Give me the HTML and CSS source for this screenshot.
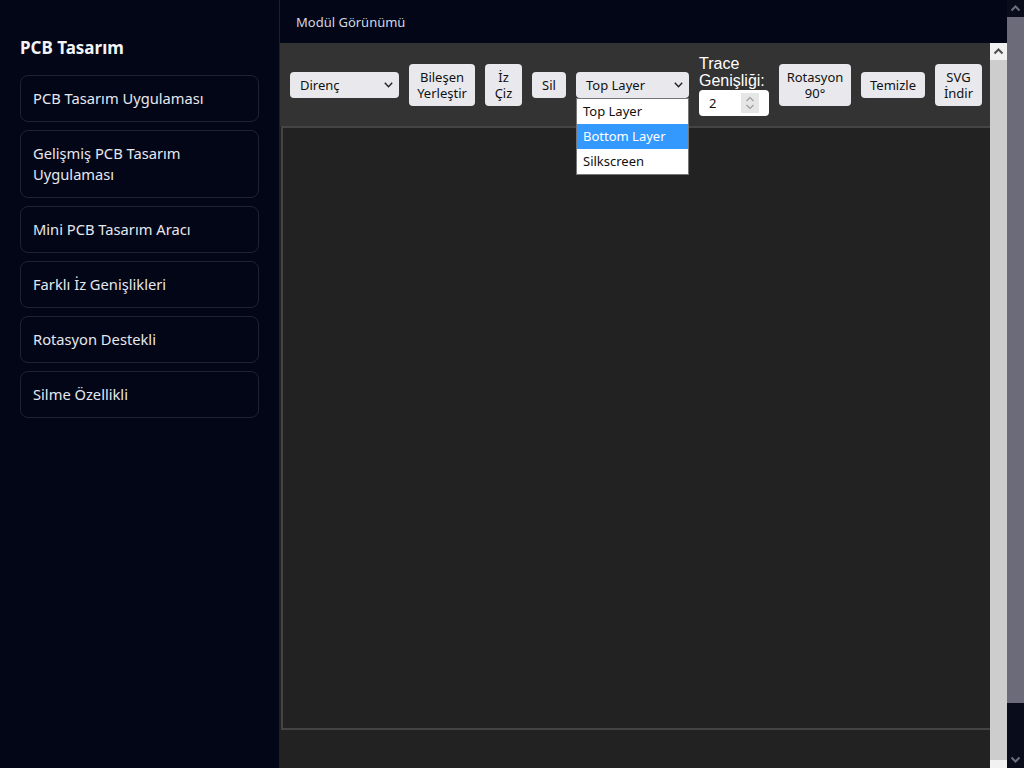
FILE: index.html
```html
<!DOCTYPE html>
<html lang="tr">
<head>
<meta charset="utf-8">
<title>PCB Tasarım</title>
<link rel="stylesheet" href="styles.css">
</head>
<body>
<div class="app">
  <aside class="sidebar">
    <h2 class="side-title">PCB Tasarım</h2>
    <nav class="side-list">
      <div class="side-card">PCB Tasarım Uygulaması</div>
      <div class="side-card">Gelişmiş PCB Tasarım Uygulaması</div>
      <div class="side-card">Mini PCB Tasarım Aracı</div>
      <div class="side-card">Farklı İz Genişlikleri</div>
      <div class="side-card">Rotasyon Destekli</div>
      <div class="side-card">Silme Özellikli</div>
    </nav>
  </aside>
  <main class="main">
    <header class="main-header">Modül Görünümü</header>
    <div class="frame">
      <div class="frame-content">
        <div class="toolbar">
          <div class="select select-part">
            <span>Direnç</span>
            <svg class="chev" width="9" height="6" viewBox="0 0 9 6"><path d="M0.8 0.8 L4.5 4.8 L8.2 0.8" fill="none" stroke="#222" stroke-width="1.4"/></svg>
          </div>
          <button class="btn btn-place">Bileşen<br>Yerleştir</button>
          <button class="btn btn-trace">İz<br>Çiz</button>
          <button class="btn btn-del">Sil</button>
          <div class="select select-layer">
            <span>Top Layer</span>
            <svg class="chev" width="9" height="6" viewBox="0 0 9 6"><path d="M0.8 0.8 L4.5 4.8 L8.2 0.8" fill="none" stroke="#222" stroke-width="1.4"/></svg>
            <ul class="options">
              <li class="opt">Top Layer</li>
              <li class="opt opt-active">Bottom Layer</li>
              <li class="opt">Silkscreen</li>
            </ul>
          </div>
          <label class="trace"><span class="trace-text">Trace Genişliği:</span>
            <span class="num">
              <span class="num-val">2</span>
              <span class="spin">
                <svg width="18" height="20" viewBox="0 0 18 20"><path d="M5.5 8 L9 4.5 L12.5 8" fill="none" stroke="#9a9a9a" stroke-width="1.1"/><path d="M5.5 12 L9 15.5 L12.5 12" fill="none" stroke="#9a9a9a" stroke-width="1.1"/></svg>
              </span>
            </span>
          </label>
          <button class="btn btn-rot">Rotasyon<br>90°</button>
          <button class="btn btn-clear">Temizle</button>
          <button class="btn btn-svg">SVG<br>İndir</button>
        </div>
        <div class="canvas"></div>
      </div>
      <div class="scroll scroll-inner">
        <div class="sb-btn">
          <svg width="17" height="17" viewBox="0 0 17 17"><path d="M4.5 10.5 L8.5 6.5 L12.5 10.5" fill="none" stroke="#505050" stroke-width="2"/></svg>
        </div>
        <div class="sb-thumb"></div>
        <div class="sb-rest"></div>
      </div>
    </div>
  </main>
</div>
<div class="scroll scroll-outer">
  <div class="sb-btn">
    <svg width="17" height="17" viewBox="0 0 17 17"><path d="M4.5 10.5 L8.5 6.5 L12.5 10.5" fill="none" stroke="#6c6f7e" stroke-width="2"/></svg>
  </div>
  <div class="sb-thumb"></div>
  <div class="sb-track"></div>
  <div class="sb-btn">
    <svg width="17" height="17" viewBox="0 0 17 17"><path d="M4.5 6.5 L8.5 10.5 L12.5 6.5" fill="none" stroke="#6c6f7e" stroke-width="2"/></svg>
  </div>
</div>
</body>
</html>
```

FILE: styles.css
```css
* { box-sizing: border-box; }

html, body {
  margin: 0;
  padding: 0;
  height: 768px;
  overflow: hidden;
}

body {
  display: flex;
  background: #030617;
  font-family: "Noto Sans", "Open Sans", sans-serif;
  color: #e6e8ef;
}

.app {
  flex: 1;
  display: flex;
  min-width: 0;
}

/* Sidebar */
.sidebar {
  width: 280px;
  flex-shrink: 0;
  border-right: 1px solid #1b2030;
  padding: 37px 20px 0 20px;
}

.side-title {
  margin: 0 0 16px 0;
  font-size: 17px;
  line-height: 22px;
  font-weight: 700;
  color: #f2f4f8;
}

.side-list {
  display: flex;
  flex-direction: column;
  gap: 8px;
}

.side-card {
  border: 1px solid #1e2332;
  border-radius: 8px;
  padding: 12px 12px;
  font-size: 14.7px;
  line-height: 21px;
  color: #e6e8ef;
}

/* Main */
.main {
  flex: 1;
  display: flex;
  flex-direction: column;
  min-width: 0;
}

.main-header {
  height: 43px;
  flex-shrink: 0;
  padding-left: 16px;
  display: flex;
  align-items: center;
  font-size: 13px;
  color: #d3d6e0;
}

.frame {
  flex: 1;
  display: flex;
  min-height: 0;
  background: #222;
}

.frame-content {
  flex: 1;
  min-width: 0;
  overflow: hidden;
  background: #222;
}

.toolbar {
  background: #333;
  padding: 11px 10px 10px 10px;
  display: flex;
  align-items: center;
  gap: 10px;
  font-size: 13px;
}

.select {
  position: relative;
  height: 26px;
  background: #e9e9ed;
  border-radius: 4px;
  padding: 0 6px 0 10px;
  display: flex;
  align-items: center;
  justify-content: space-between;
  color: #111;
  font-size: 13px;
  flex-shrink: 0;
}

.select-part { width: 109px; }
.select-layer { width: 113px; }

.btn {
  flex-shrink: 0;
  font-family: "Noto Sans", "Open Sans", sans-serif;
  font-size: 13px;
  line-height: 16px;
  padding: 5px 0;
  background: #e9e9ed;
  color: #111;
  border: none;
  border-radius: 4px;
  text-align: center;
}

.btn-place { width: 66px; }
.btn-trace { width: 37px; }
.btn-del { width: 34px; }
.btn-rot { width: 72px; }
.btn-clear { width: 64px; }
.btn-svg { width: 47px; }

.options {
  position: absolute;
  top: 26px;
  left: 0;
  width: 113px;
  margin: 0;
  padding: 0;
  list-style: none;
  background: #fff;
  border: 1px solid #767676;
  z-index: 5;
}

.opt {
  height: 25px;
  line-height: 25px;
  padding-left: 6px;
  font-size: 13px;
  color: #111;
}

.opt-active {
  background: #3399ff;
  color: #fff;
}

.trace {
  flex-shrink: 0;
  width: 70px;
  padding-top: 1px;
  font-family: "Liberation Sans", Arial, sans-serif;
  font-size: 16px;
  line-height: 17.4px;
  color: #fff;
}

.trace-text {
  display: block;
}

.num {
  display: flex;
  align-items: center;
  justify-content: space-between;
  width: 70px;
  height: 26px;
  background: #fff;
  border-radius: 4px;
  padding: 0 10px 0 10px;
  font-family: "Noto Sans", "Open Sans", sans-serif;
  font-size: 13px;
  line-height: 16px;
  color: #111;
}

.spin {
  display: flex;
  width: 18px;
  height: 20px;
  background: #e6e6e6;
}

.canvas {
  height: 604px;
  width: 804px;
  margin-left: 1px;
  border: 2px solid #444;
  background: #222;
}

/* Fake scrollbars */
.scroll {
  width: 17px;
  flex-shrink: 0;
  display: flex;
  flex-direction: column;
}

.sb-btn {
  height: 17px;
  flex-shrink: 0;
  display: flex;
}

.scroll-inner { background: #f1f1f1; }
.scroll-inner .sb-btn { background: #f1f1f1; }
.scroll-inner .sb-thumb { height: 700px; background: #cdcdcd; }
.scroll-inner .sb-rest { flex: 1; }

.scroll-outer { background: #090c1b; }
.scroll-outer .sb-thumb { height: 686px; background: #6b6b7a; }
.scroll-outer .sb-track { flex: 1; }
```
